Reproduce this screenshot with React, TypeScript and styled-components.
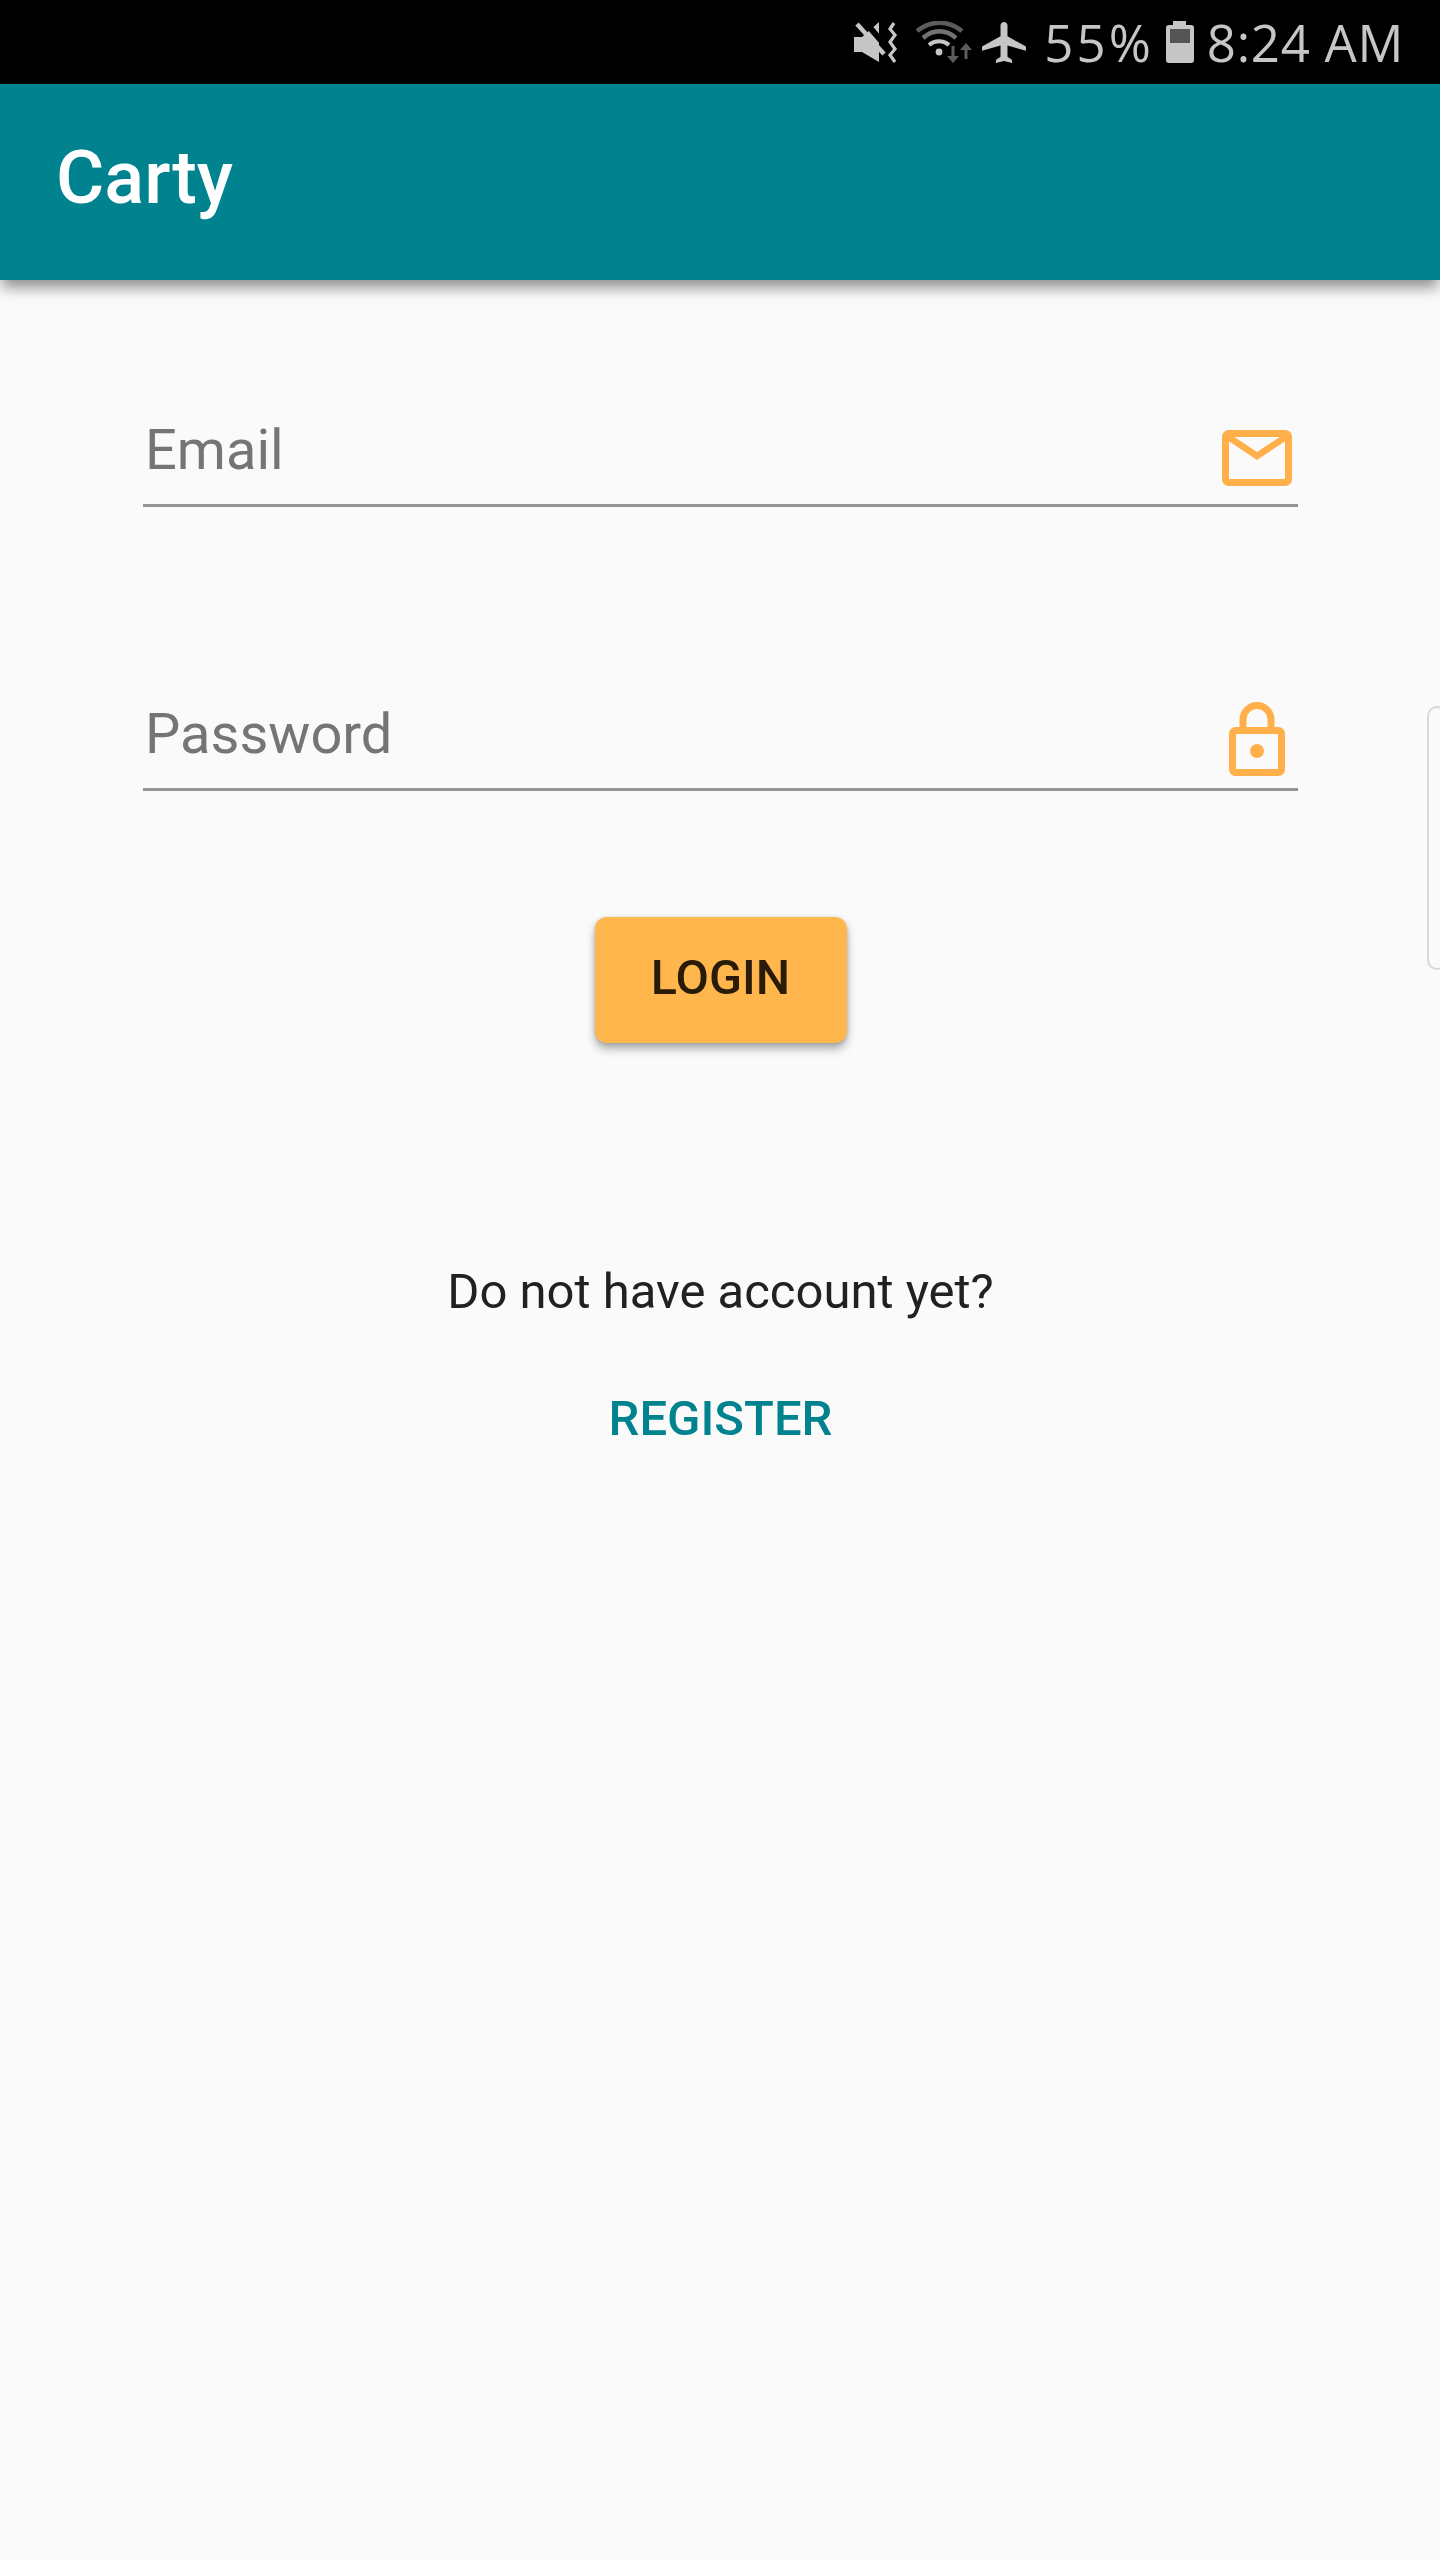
import React from "react";
import styled, { createGlobalStyle } from "styled-components";

const Global = createGlobalStyle`
  html, body { margin: 0; padding: 0; background: #fafafa; }
  body { font-family: Roboto, "Liberation Sans", sans-serif; }
`;

const Page = styled.div`
  position: relative;
  width: 1440px;
  height: 2560px;
  overflow: hidden;
  background: #fafafa;
  display: flex;
  flex-direction: column;
`;

const StatusBar = styled.div`
  height: 84px;
  background: #000;
  color: #c6c6c6;
  display: flex;
  align-items: center;
  justify-content: flex-end;
  padding-right: 36px;
  flex: none;
`;

const StatusText = styled.span<{ $gap: number; $tracking: number }>`
  font-family: "Open Sans", Roboto, sans-serif;
  font-weight: 400;
  font-size: 51px;
  letter-spacing: ${(p) => p.$tracking}px;
  line-height: 84px;
  margin-left: ${(p) => p.$gap}px;
  white-space: nowrap;
`;

const StatusIcon = styled.svg<{ $gap: number }>`
  display: block;
  flex: none;
  margin-left: ${(p) => p.$gap}px;
`;

const AppBar = styled.header`
  position: relative;
  z-index: 1;
  height: 196px;
  flex: none;
  background: #00838f;
  box-shadow: 0 9px 14px -2px rgba(0, 0, 0, 0.45);
  padding: 0 0 8px 56px;
  box-sizing: border-box;
  display: flex;
  align-items: center;
`;

const Title = styled.h1`
  margin: 0;
  color: #fff;
  font-size: 74px;
  font-weight: 500;
  line-height: 80px;
`;

const Form = styled.main`
  display: flex;
  flex-direction: column;
  align-items: center;
  padding: 143px 0 0 1px;
`;

const Field = styled.label`
  width: 1155px;
  height: 81px;
  box-sizing: content-box;
  display: flex;
  align-items: flex-start;
  justify-content: space-between;
  border-bottom: 3px solid #949494;
  & + & {
    margin-top: 200px;
  }
`;

const Placeholder = styled.span`
  color: #757575;
  font-size: 56px;
  line-height: 66px;
  padding-left: 2px;
  margin-top: -6px;
`;

const FieldIcon = styled.svg`
  display: block;
  flex: none;
  margin-right: 6px;
  margin-top: 7px;
`;

const LockIcon = styled(FieldIcon)`
  margin-top: -5px;
  margin-right: 13px;
`;

const LoginButton = styled.button`
  width: 252px;
  height: 126px;
  margin-top: 126px;
  border: none;
  border-radius: 12px;
  background: #ffb74d;
  color: #2a1a08;
  font-family: inherit;
  font-size: 48.5px;
  font-weight: 500;
  padding: 0 0 6px;
  box-shadow: 0 6px 10px rgba(0, 0, 0, 0.3), 0 1px 4px rgba(0, 0, 0, 0.15);
`;

const Prompt = styled.p`
  margin: 221px 0 0;
  color: #212121;
  font-size: 49px;
  line-height: 56px;
`;

const RegisterLink = styled.a`
  margin-top: 71px;
  color: #00838f;
  font-size: 49px;
  font-weight: 500;
  line-height: 56px;
`;

const EdgeHandle = styled.div`
  position: absolute;
  left: 1427px;
  top: 706px;
  width: 20px;
  height: 264px;
  box-sizing: border-box;
  border: 2px solid #d8d8d8;
  border-radius: 16px;
`;

export default function App() {
  return (
    <Page>
      <Global />
      <StatusBar>
        <StatusIcon $gap={0} width="44" height="41" viewBox="0 0 44 41">
          <path d="M0 15h8L25 0v40L8 30H0z" fill="#c6c6c6" />
          <path d="M11 0l26 30" stroke="#000" strokeWidth="6" />
          <path d="M3 2l27 30" stroke="#c6c6c6" strokeWidth="4.5" />
          <path d="M40 1l-4 6 5 6-5 7 5 7-5 6 5 7" fill="none" stroke="#c6c6c6" strokeWidth="3.2" />
        </StatusIcon>
        <StatusIcon $gap={18} width="56" height="42" viewBox="0 0 56 42">
          <path d="M1 10C15-1 32-1 46 10" fill="none" stroke="#5c5c5c" strokeWidth="4.5" />
          <path d="M7 17C17 8 30 8 40 17" fill="none" stroke="#737373" strokeWidth="4.5" />
          <path d="M13 24c6-5 14-5 20 0" fill="none" stroke="#c6c6c6" strokeWidth="4" />
          <circle cx="23" cy="31" r="3.4" fill="#c6c6c6" />
          <path d="M35.5 25v10H31l6 7 6-7h-4.5V25zM50 22l-6 7h4.5v9h3v-9H56z" fill="#5c5c5c" />
        </StatusIcon>
        <StatusIcon $gap={10} width="44" height="41" viewBox="2 2 19 20" preserveAspectRatio="none">
          <path
            d="M21 16v-2l-8-5V3.5c0-.83-.67-1.5-1.5-1.5S10 2.67 10 3.5V9l-8 5v2l8-2.5V19l-2 1.5V22l3.5-1 3.5 1v-1.5L13 19v-5.5l8 2.5z"
            fill="#c6c6c6"
          />
        </StatusIcon>
        <StatusText $gap={18} $tracking={3}>55%</StatusText>
        <StatusIcon $gap={12} width="28" height="42" viewBox="0 0 28 42">
          <path d="M7 0h13v4h5a3 3 0 0 1 3 3v32a3 3 0 0 1-3 3H3a3 3 0 0 1-3-3V7a3 3 0 0 1 3-3h4z" fill="#c6c6c6" />
          <rect x="4" y="8" width="20" height="14" fill="#555" />
        </StatusIcon>
        <StatusText $gap={13} $tracking={0.7}>8:24 AM</StatusText>
      </StatusBar>
      <AppBar>
        <Title>Carty</Title>
      </AppBar>
      <Form>
        <Field>
          <Placeholder>Email</Placeholder>
          <FieldIcon width="70" height="56" viewBox="0 0 70 56">
            <rect x="3.5" y="3.5" width="63" height="49" rx="3" fill="none" stroke="#ffb04a" strokeWidth="7" />
            <path d="M5 6l30 20L65 6" fill="none" stroke="#ffb04a" strokeWidth="6.5" />
          </FieldIcon>
        </Field>
        <Field>
          <Placeholder>Password</Placeholder>
          <LockIcon width="56" height="74" viewBox="0 0 56 74">
            <path d="M14 27v-9.5a14 14 0 0 1 28 0V27" fill="none" stroke="#ffb04a" strokeWidth="7" />
            <rect x="3.5" y="28.5" width="49" height="42" rx="3" fill="none" stroke="#ffb04a" strokeWidth="7" />
            <circle cx="28" cy="49" r="7" fill="#ffb04a" />
          </LockIcon>
        </Field>
        <LoginButton>LOGIN</LoginButton>
        <Prompt>Do not have account yet?</Prompt>
        <RegisterLink>REGISTER</RegisterLink>
      </Form>
      <EdgeHandle />
    </Page>
  );
}
